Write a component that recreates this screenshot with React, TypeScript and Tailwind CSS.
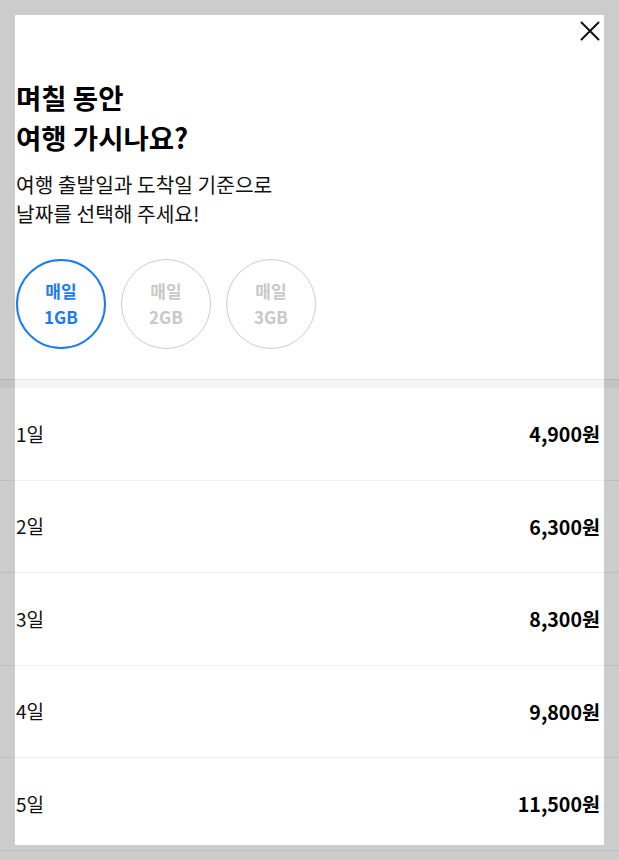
import React from "react";

const rows = [
  { d: "1일", p: "4,900원" },
  { d: "2일", p: "6,300원" },
  { d: "3일", p: "8,300원" },
  { d: "4일", p: "9,800원" },
  { d: "5일", p: "11,500원" },
];

const plans = [
  { top: "매일", bottom: "1GB", active: true },
  { top: "매일", bottom: "2GB", active: false },
  { top: "매일", bottom: "3GB", active: false },
];

export default function App() {
  return (
    <div className="relative h-[860px] overflow-hidden bg-white text-[#111] font-['Noto_Sans_CJK_KR','Noto_Sans',sans-serif]">
      <div className="px-4">
        <div className="flex justify-end pt-[21px]">
          <button className="mr-[3px] h-5 w-5" aria-label="닫기">
            <svg width="20" height="20" viewBox="0 0 20 20" fill="none">
              <path d="M1.5 1.5L18.5 18.5M18.5 1.5L1.5 18.5" stroke="#111" strokeWidth="2" strokeLinecap="round" />
            </svg>
          </button>
        </div>
        <h1 className="mt-9 text-[27.5px] font-bold leading-[40px] text-black">
          며칠 동안
          <br />
          여행 가시나요?
        </h1>
        <p className="mt-[13px] text-[20.3px] leading-[29px] text-[#111]">
          여행 출발일과 도착일 기준으로
          <br />
          날짜를 선택해 주세요!
        </p>
        <div className="mt-[31px] flex gap-[15px]">
          {plans.map((pl, i) => (
            <div
              key={i}
              className={
                pl.active
                  ? "flex h-[90px] w-[90px] flex-col items-center justify-center rounded-full border-2 border-[#1a7cf2] text-[17px] font-bold leading-[26px] text-[#1a7cf2]"
                  : "flex h-[90px] w-[90px] flex-col items-center justify-center rounded-full border border-[#cccccc] text-[17px] font-bold leading-[26px] text-[#c8c8c8]"
              }
            >
              <span>{pl.top}</span>
              <span>{pl.bottom}</span>
            </div>
          ))}
        </div>
      </div>
      <div className="mt-[30px] h-[9px] border-t border-[#e5e5e5] bg-[#f5f5f7]" />
      <ul>
        {rows.map((r) => (
          <li
            key={r.d}
            className="flex h-[92.5px] items-center justify-between border-b border-[#efeff2] px-4 text-[19px]"
          >
            <span>{r.d}</span>
            <span className="mr-[3px] text-[19.6px] font-bold text-black">{r.p}</span>
          </li>
        ))}
      </ul>
      <div className="pointer-events-none absolute inset-0 border-[15px] border-black/20" />
    </div>
  );
}
